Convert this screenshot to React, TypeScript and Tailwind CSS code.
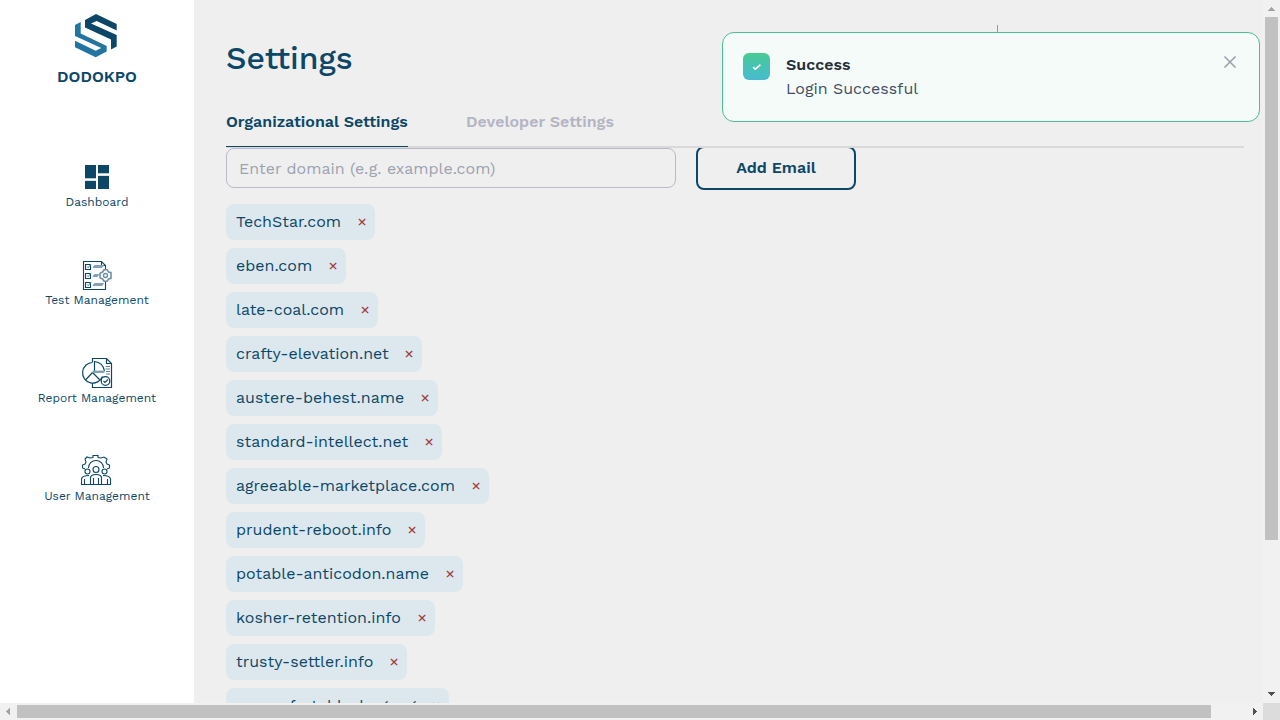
import React from 'react';

const domains: { name: string; box: string }[] = [
  { name: 'TechStar.com', box: 'w-[149px]' },
  { name: 'eben.com', box: 'w-[120px]' },
  { name: 'late-coal.com', box: 'w-[152px]' },
  { name: 'crafty-elevation.net', box: 'w-[196px]' },
  { name: 'austere-behest.name', box: 'w-[212px]' },
  { name: 'standard-intellect.net', box: 'w-[216px]' },
  { name: 'agreeable-marketplace.com', box: 'w-[263px]' },
  { name: 'prudent-reboot.info', box: 'w-[199px]' },
  { name: 'potable-anticodon.name', box: 'w-[237px]' },
  { name: 'kosher-retention.info', box: 'w-[209px]' },
  { name: 'trusty-settler.info', box: 'w-[181px]' },
  { name: 'uncomfortable-bug.org', box: 'w-[223px]' },
];

function Logo() {
  return (
    <svg width="44" height="45" viewBox="0 0 44 45" className="shrink-0">
      <path d="M10 7 21 1 41.700 11V17.500L21.700 8 16 10.500 41.700 22V33.500L36 36.500V26.500L10 14.500Z" fill="#0c4767" />
      <path d="M0 12 5.700 9V20.500L31.700 33V38.500L20.700 44.300 0 34.300V27.700L20.700 37.700 26.300 35 0 23Z" fill="#2274a1" />
    </svg>
  );
}

function DashboardIcon() {
  return (
    <svg width="32" height="32" viewBox="0 0 32 32" fill="#0c4767">
      <path d="M4 4h11v13H4zM17 4h11v8H17zM4 20h11v8H4zM17 15h11v13H17z" />
      <path d="M4 17h11v1H4zM17 12h11v1H17zM4 19.500h11v.5H4zM17 14.500h11v.5H17z" opacity=".3" />
    </svg>
  );
}

function TestIcon() {
  return (
    <svg width="32" height="32" viewBox="0 0 32 32" fill="none" stroke="#0c4767">
      <path d="M24.500 11V6.500L20.500 2.500H2.500V30.500H24.500V23M20.500 2.500V6.500H24.500" strokeWidth="1.100" />
      <path d="M4.500 5.500h5v5h-5zM4.500 14.500h5v5h-5zM4.500 23.500h5v5h-5z" strokeWidth="1.100" />
      <path d="M6 7.500l1.200 1.300L10 5M6 16.500l1.200 1.300L10 14M6 25.500l1.200 1.300L10 23" stroke="#56829a" />
      <path d="M12 8.500 13.500 6.500H22.500L21 8.500ZM12 17.500 13.500 15.500H17.500L16.500 17.500ZM12 26.500 13.500 24.500H22.500L21 26.500Z" fill="#83a1b2" stroke="#83a1b2" />
      <path d="M23 10.800h3.400l1 2.200 2.600.6v5.800l-2.600.6-1 2.200H23l-1.400-2.200-2.600-1.200v-4.600l2.600-1.200Z" fill="#fff" stroke="#6e91a5" strokeWidth="1.600" strokeLinejoin="round" />
      <circle cx="24.500" cy="16.500" r="2" stroke="#6e91a5" strokeWidth="1.400" />
    </svg>
  );
}

function ReportIcon() {
  return (
    <svg width="32" height="32" viewBox="0 0 32 32" fill="none" stroke="#0c4767" strokeWidth="1.200">
      <path d="M11.500 5V1.500H25.500L30.500 6.500V30.500H11.500V26M25.500 1.500V6.500H30.500" />
      <path d="M11.500 5.500A10.300 10.300 0 1 0 21.500 19.500M11.500 15.500 4.500 23M11.500 15.500 18.500 22.500M13.500 14V4.500Q22 5.500 23.500 14" />
      <path d="M11.500 14.800H23.500" stroke="#83a1b2" strokeWidth="2.500" />
      <path d="M24.500 9.500H29M24.500 12H29M25 14.500H29M25 17H29" stroke="#56829a" strokeWidth="1" />
      <circle cx="24.500" cy="24" r="4.300" fill="#fff" />
      <path d="m22.500 24 1.500 1.500 3-3" />
    </svg>
  );
}

function UserIcon() {
  return (
    <svg width="32" height="32" viewBox="1 1 32 32" fill="none" stroke="#0c4767" strokeWidth="1.100">
      <path d="M5 15 2.500 14V11L5 10 6 8 5 5 7 3 10 4 13 3.500V1.500H18V3.500L21 4 24 3 27 5 26 8 27 10 29.500 11V14L27 15" />
      <path d="M8.500 14A7.500 7.500 0 0 1 23.500 14" />
      <circle cx="16" cy="15.500" r="3" /><circle cx="7.500" cy="17.500" r="2.500" /><circle cx="24.500" cy="17.500" r="2.500" />
      <path d="M10.500 30.500V24Q10.500 20.500 16 20.500T21.500 24V30.500ZM10 30.500H1.500V25Q2 21.500 9 21.500M22 30.500H30.500V25Q30 21.500 23 21.500M4.500 25V30M27.500 25V30M13.500 24V30M18.500 24V30" />
    </svg>
  );
}

function NavItem({ icon, label }: { icon: React.ReactNode; label: string }) {
  return (
    <a className="flex h-[98px] w-full flex-col items-center text-[12px] leading-[16px]">
      <span className="flex h-8 w-8">{icon}</span>
      <span className="mt-px whitespace-nowrap">{label}</span>
    </a>
  );
}

function Toast() {
  return (
    <div className="absolute top-8 left-[722px] z-20 flex h-[90px] w-[538px] rounded-xl border border-[#4dbb96] bg-[#f5fbf9] pt-5 pr-[22px] pl-5">
      <span className="flex h-[27px] w-[27px] shrink-0 items-center justify-center rounded-md bg-linear-to-b from-[#48ca93] to-[#48bad0]">
        <svg width="11" height="11" viewBox="0 0 11 11" fill="none" stroke="#fff" strokeWidth="1.600" strokeLinecap="round" strokeLinejoin="round">
          <path d="m2.500 6.500 1.800 1.700 4.700-4" />
        </svg>
      </span>
      <div className="ml-4 flex-1 leading-6">
        <p className="font-semibold text-[#27303a]">Success</p>
        <p className="text-[#414d63]">Login Successful</p>
      </div>
      <svg width="14" height="14" viewBox="0 0 14 14" fill="none" stroke="#979fa9" strokeWidth="1.500" className="mt-[2px]">
        <path d="m1.500 1.500 11 11M12.500 1.500l-11 11" />
      </svg>
    </div>
  );
}

export default function App() {
  return (
    <div className="relative grid h-[720px] w-[1280px] grid-cols-[1263px_17px] grid-rows-[703px_17px] overflow-hidden bg-[#efefef] font-['Work_Sans','Noto_Sans',sans-serif] text-[16px] text-[#0c4767]">
      <div className="flex min-h-0 overflow-hidden">
        <aside className="flex w-[194px] shrink-0 flex-col items-center bg-white pt-[13px]">
          <Logo />
          <div className="mt-[10px] whitespace-nowrap text-[16px] leading-[18px] font-semibold">DODOKPO</div>
          <nav className="mt-[75px] flex w-full flex-col">
            <NavItem icon={<DashboardIcon />} label="Dashboard" />
            <NavItem icon={<TestIcon />} label="Test Management" />
            <NavItem icon={<ReportIcon />} label="Report Management" />
            <NavItem icon={<UserIcon />} label="User Management" />
          </nav>
        </aside>
        <main className="flex min-w-0 flex-1 flex-col pr-[19px] pl-8">
          <h1 className="mt-9 text-[32px] leading-[44px] font-medium">Settings</h1>
          <div className="relative z-10 mt-[30px] flex h-[38px] shrink-0 gap-[58px] border-b-2 border-[#d9d9d9] font-semibold">
            <div className="h-[37px] w-[182px] whitespace-nowrap border-b border-[#0c4767] leading-6">Organizational Settings</div>
            <div className="whitespace-nowrap leading-6 text-[#b4b4c4]">Developer Settings</div>
          </div>
          <div className="flex gap-5">
            <input className="h-10 w-[450px] rounded-lg border border-[#babac8] px-3 placeholder:text-[#9ca3af]" placeholder="Enter domain (e.g. example.com)" />
            <button className="-mt-0.5 h-11 w-[160px] rounded-lg border-2 border-[#0c4767] font-semibold">Add Email</button>
          </div>
          <ul className="mt-[14px] flex flex-col gap-2">
            {domains.map((d) => (
              <li key={d.name} className={`flex h-9 shrink-0 items-center justify-between rounded-lg bg-[#dde8ee] pr-2 pl-[10px] ${d.box}`}>
                <span className="whitespace-nowrap">{d.name}</span>
                <span className="text-[#a03a3f]">×</span>
              </li>
            ))}
          </ul>
        </main>
      </div>
      <div className="flex flex-col items-center bg-[#f1f1f1]">
        <svg width="17" height="17" viewBox="0 0 17 17" shapeRendering="crispEdges"><path d="M5 11h7L8.500 7Z" fill="#a3a3a3" /></svg>
        <div className="h-[523px] w-[13px] bg-[#c1c1c1]" />
        <svg className="mt-auto" width="17" height="17" viewBox="0 0 17 17" shapeRendering="crispEdges"><path d="M5 6h7L8.500 10Z" fill="#505050" /></svg>
      </div>
      <div className="flex items-center bg-[#f1f1f1]">
        <svg width="17" height="17" viewBox="0 0 17 17" shapeRendering="crispEdges"><path d="M10 5v7L6 8.500Z" fill="#a3a3a3" /></svg>
        <div className="h-[13px] w-[1194px] bg-[#c1c1c1]" />
        <svg className="ml-auto" width="17" height="17" viewBox="0 0 17 17" shapeRendering="crispEdges"><path d="M7 5v7L11 8.500Z" fill="#505050" /></svg>
      </div>
      <div className="bg-[#dcdcdc]" />
      <div className="absolute top-[25px] left-[997px] h-[30px] w-px bg-[#8d99ae]" />
      <Toast />
    </div>
  );
}
